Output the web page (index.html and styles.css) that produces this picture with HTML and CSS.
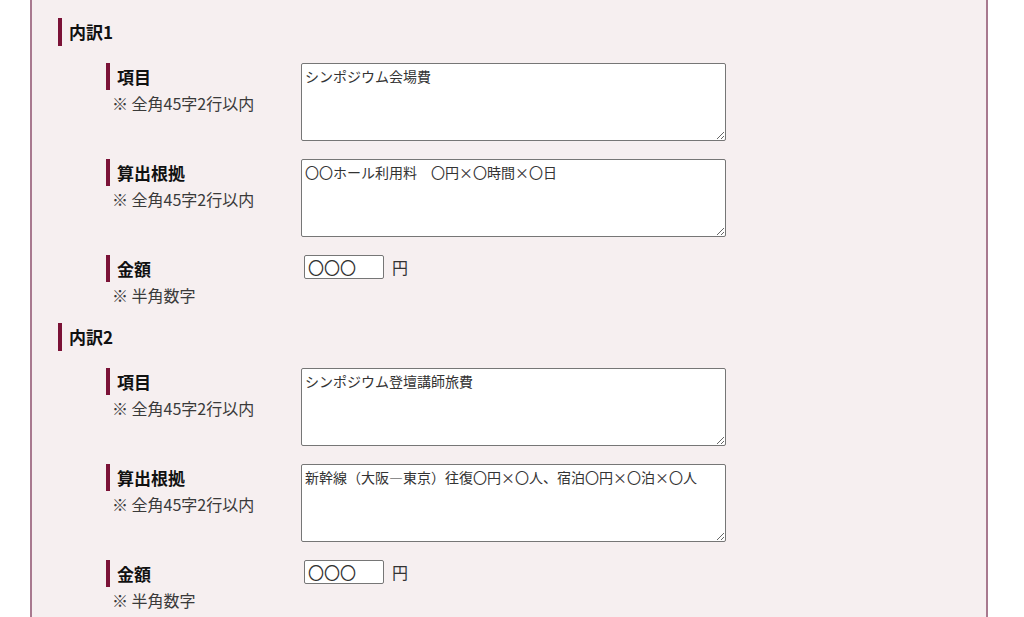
FILE: index.html
```html
<!DOCTYPE html>
<html lang="ja">
<head>
<meta charset="utf-8">
<title>内訳</title>
<link rel="stylesheet" href="styles.css">
</head>
<body>
<div class="box">
  <section class="section">
    <h3 class="section-title">内訳1</h3>
    <div class="rows">
      <div class="row">
        <div class="label">
          <div class="label-title">項目</div>
          <div class="label-note">※ 全角45字2行以内</div>
        </div>
        <textarea class="field-area">シンポジウム会場費</textarea>
      </div>
      <div class="row">
        <div class="label">
          <div class="label-title">算出根拠</div>
          <div class="label-note">※ 全角45字2行以内</div>
        </div>
        <textarea class="field-area">〇〇ホール利用料　〇円×〇時間×〇日</textarea>
      </div>
      <div class="row">
        <div class="label">
          <div class="label-title">金額</div>
          <div class="label-note">※ 半角数字</div>
        </div>
        <div class="amount">
          <input class="field-input" type="text" value="〇〇〇">
          <span class="unit">円</span>
        </div>
      </div>
    </div>
  </section>
  <section class="section">
    <h3 class="section-title">内訳2</h3>
    <div class="rows">
      <div class="row">
        <div class="label">
          <div class="label-title">項目</div>
          <div class="label-note">※ 全角45字2行以内</div>
        </div>
        <textarea class="field-area">シンポジウム登壇講師旅費</textarea>
      </div>
      <div class="row">
        <div class="label">
          <div class="label-title">算出根拠</div>
          <div class="label-note">※ 全角45字2行以内</div>
        </div>
        <textarea class="field-area">新幹線（大阪—東京）往復〇円×〇人、宿泊〇円×〇泊×〇人</textarea>
      </div>
      <div class="row">
        <div class="label">
          <div class="label-title">金額</div>
          <div class="label-note">※ 半角数字</div>
        </div>
        <div class="amount">
          <input class="field-input" type="text" value="〇〇〇">
          <span class="unit">円</span>
        </div>
      </div>
    </div>
  </section>
</div>
</body>
</html>
```

FILE: styles.css
```css
html {
  overflow: hidden;
}

body {
  margin: 0;
  background: #ffffff;
  font-family: "Noto Sans CJK JP", "Noto Sans", sans-serif;
  color: #222222;
}

.box {
  margin-left: 30px;
  width: 958px;
  box-sizing: border-box;
  border-left: 2px solid #a8798f;
  border-right: 2px solid #a8798f;
  background: #f6eff0;
  padding: 18px 0 40px 0;
  display: flex;
  flex-direction: column;
  gap: 17px;
}

.section {
  display: flex;
  flex-direction: column;
  gap: 17px;
}

.section-title {
  margin: 0 0 0 26px;
  height: 28px;
  line-height: 28px;
  border-left: 4px solid #7b1237;
  padding-left: 7px;
  font-size: 17px;
  font-weight: bold;
  color: #111111;
}

.rows {
  display: flex;
  flex-direction: column;
  gap: 18px;
  padding-left: 74px;
}

.row {
  display: flex;
  align-items: flex-start;
}

.label {
  width: 195px;
  flex: none;
}

.label-title {
  height: 27px;
  line-height: 27px;
  border-left: 4px solid #7b1237;
  padding-left: 7px;
  font-size: 17px;
  font-weight: bold;
  color: #111111;
}

.label-note {
  margin-top: 2px;
  margin-left: 6px;
  font-size: 16px;
  line-height: 22px;
  color: #3a3a3a;
}

.field-area {
  display: block;
  width: 425px;
  height: 78px;
  box-sizing: border-box;
  margin: 0;
  padding: 2px 3px;
  border: 1px solid #767676;
  border-radius: 2px;
  background: #ffffff;
  font-family: "Noto Sans CJK JP", "Noto Sans", sans-serif;
  font-size: 14px;
  line-height: 20px;
  color: #333333;
}

.amount {
  display: flex;
  align-items: center;
  margin-left: 3px;
}

.field-input {
  width: 80px;
  height: 24px;
  box-sizing: border-box;
  margin: 0;
  padding: 0 3px;
  border: 1px solid #767676;
  border-radius: 2px;
  background: #ffffff;
  font-family: "Noto Sans CJK JP", "Noto Sans", sans-serif;
  font-size: 16px;
  color: #333333;
}

.unit {
  margin-left: 8px;
  font-size: 16px;
  color: #333333;
}
```
